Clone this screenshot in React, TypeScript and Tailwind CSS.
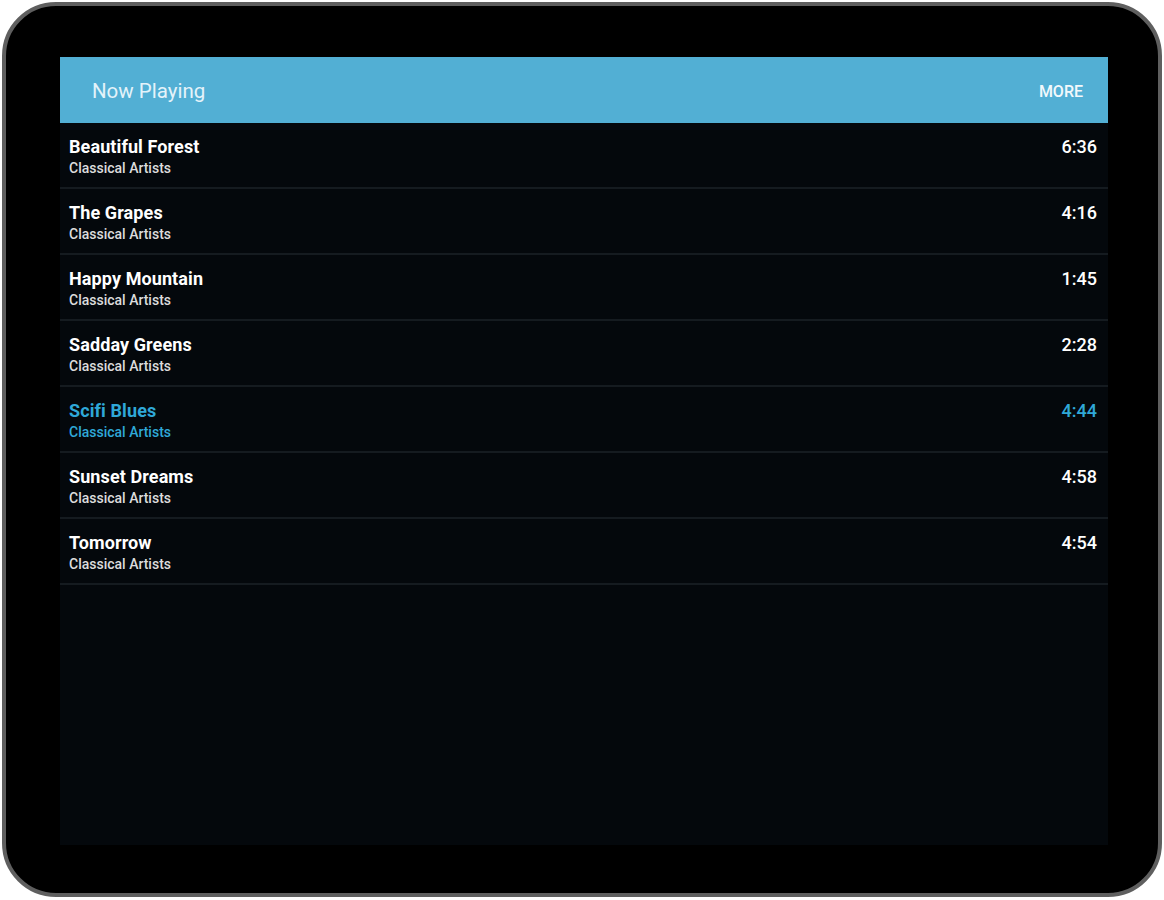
const tracks = [
  { title: 'Beautiful Forest', time: '6:36' },
  { title: 'The Grapes', time: '4:16' },
  { title: 'Happy Mountain', time: '1:45' },
  { title: 'Sadday Greens', time: '2:28' },
  { title: 'Scifi Blues', time: '4:44', active: true },
  { title: 'Sunset Dreams', time: '4:58' },
  { title: 'Tomorrow', time: '4:54' },
]

function TrackRow({ title, time, active }: { title: string; time: string; active?: boolean }) {
  const color = active ? 'text-[#2fa8d8]' : 'text-white'
  return (
    <div className="flex h-[66px] items-start justify-between border-b-2 border-[#151b20] pl-[9px] pr-[11px] pt-[13px]">
      <div className="flex flex-col">
        <span className={`text-[18px] leading-[22px] font-bold tracking-[0.1px] ${color}`}>{title}</span>
        <span className={`text-[14px] leading-[21px] font-medium ${active ? 'text-[#2fa8d8]' : 'text-[#dcdcdc]'}`}>Classical Artists</span>
      </div>
      <span className={`text-[18px] leading-[22px] font-medium ${color}`}>{time}</span>
    </div>
  )
}

export default function App() {
  return (
    <div className="w-[1164px] h-[900px] bg-white pl-[2px] pt-[2px]" style={{ fontFamily: 'Roboto, "Liberation Sans", sans-serif' }}>
      <div className="w-[1160px] h-[895px] rounded-[54px] border-[4px] border-[#5f5f5f] bg-black pl-[54px] pt-[51px]">
        <div className="flex h-[788px] w-[1048px] flex-col bg-[#04080c]">
          <div className="flex h-[66px] items-center justify-between bg-[#52afd4] pl-[32px] pr-[25px] pt-[3px]">
            <span className="text-[20.5px] text-[#e4f3fa]">Now Playing</span>
            <span className="text-[16px] font-medium text-[#f2f9fc]">MORE</span>
          </div>
          {tracks.map((t) => (
            <TrackRow key={t.title} {...t} />
          ))}
        </div>
      </div>
    </div>
  )
}
